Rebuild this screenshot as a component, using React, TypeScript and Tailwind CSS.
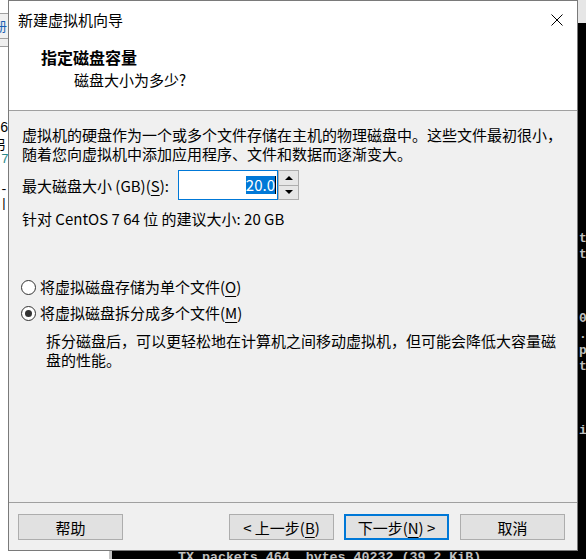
import React from 'react';

const Key: React.FC<{ k: string }> = ({ k }) => (
  <span className="underline underline-offset-[3px] decoration-1">{k}</span>
);

const Btn: React.FC<{ children: React.ReactNode; primary?: boolean }> = ({ children, primary }) => (
  <button
    className={
      primary
        ? 'h-[26px] w-[105px] bg-[#e1e1e1] border-2 border-[#0078d7] text-[15px] leading-none text-black flex items-center justify-center'
        : 'h-[26px] w-[105px] bg-[#e1e1e1] border border-[#adadad] text-[15px] leading-none text-black flex items-center justify-center'
    }
  >
    {children}
  </button>
);

const Radio: React.FC<{ checked?: boolean; children: React.ReactNode }> = ({ checked, children }) => (
  <div className="flex items-center h-[20px] gap-[4px]">
    <span className="w-[15px] h-[15px] rounded-full border border-[#333] bg-white flex items-center justify-center">
      {checked && <span className="w-[7px] h-[7px] rounded-full bg-[#333]"></span>}
    </span>
    <span className="leading-[20px]">{children}</span>
  </div>
);

const App: React.FC = () => {
  // tails of terminal lines peeking out right of the dialog
  const termTails = [
    { y: 231, c: 't' },
    { y: 247, c: 't' },
    { y: 311, c: '0' },
    { y: 327, c: '.' },
    { y: 343, c: 'p' },
    { y: 359, c: 't' },
    { y: 423, c: 'i' },
  ];

  return (
    <div className="relative w-[586px] h-[559px] overflow-hidden bg-white font-['Noto_Sans_CJK_SC','Noto_Sans',sans-serif] text-black">
      {/* window behind, left edge */}
      <div className="absolute left-0 top-0 w-[8px] h-full overflow-hidden">
        <div className="mt-[13px] h-[34px] bg-[#f0f0f0] border-t border-b border-[#a0a0a0]">
          <div className="h-[25px] border-b border-[#a0a0a0] text-[#1a5fb4] text-[13px] leading-[24px] -ml-[6px]">册</div>
        </div>
        <div className="absolute left-0 top-[121px] text-[14px] leading-[14px] font-['Liberation_Mono',monospace]">6</div>
        <div className="absolute -left-[7px] top-[137px] text-[13px] leading-[14px]">另</div>
        <div className="absolute left-[1px] top-[153px] text-[13px] leading-[14px] text-[#2a8a8a] font-['Liberation_Mono',monospace]">7</div>
        <div className="absolute left-0 top-[183px] text-[13px] leading-[14px] font-['Liberation_Mono',monospace]">-|</div>
      </div>

      {/* terminal window behind */}
      <div className="absolute left-[109px] top-0 right-0 bottom-0 flex flex-col">
        <div className="h-[23px] bg-[#e6e6e6]"></div>
        <div className="flex-1 bg-black border-l-[3px] border-[#c4c4c4]"></div>
      </div>
      {termTails.map((t) => (
        <div
          key={t.y}
          className="absolute left-[579px] text-[13px] leading-[16px] font-bold text-[#c0c0c0] font-['Liberation_Mono',monospace]"
          style={{ top: t.y }}
        >
          {t.c}
        </div>
      ))}
      <div className="absolute left-[178px] top-[550px] whitespace-pre text-[13.3px] leading-[16px] font-bold text-[#c0c0c0] font-['Liberation_Mono',monospace]">
        TX packets 464  bytes 40232 (39.2 KiB)
      </div>

      {/* wizard dialog */}
      <div className="absolute left-[8px] top-0 w-[570px] h-[551px] border border-[#7a7a7a] bg-[#f0f0f0] flex flex-col text-[15px]">
        <div className="h-[110px] shrink-0 bg-white border-b border-[#a0a0a0]">
          <div className="h-[37px] flex items-center justify-between pl-[9px] pr-[14px]">
            <span className="leading-[20px]">新建虚拟机向导</span>
            <svg width="12" height="12" viewBox="0 0 12 12">
              <path d="M0.5 0.5 L11.5 11.5 M11.5 0.5 L0.5 11.5" stroke="#000" strokeWidth="1" />
            </svg>
          </div>
          <div className="pl-[32px] pt-[9px] text-[16px] font-bold leading-[20px]">指定磁盘容量</div>
          <div className="pl-[65px] mt-[3px] leading-[20px]">磁盘大小为多少?</div>
        </div>

        <div className="flex-1 pl-[13px]">
          <p className="pt-[14px] leading-[19px]">
            虚拟机的硬盘作为一个或多个文件存储在主机的物理磁盘中。这些文件最初很小，
            <br />
            随着您向虚拟机中添加应用程序、文件和数据而逐渐变大。
          </p>

          <div className="mt-[7px] flex h-[30px]">
            <label className="w-[156px] leading-[32px]">
              最大磁盘大小 (GB)(<Key k="S" />):
            </label>
            <div className="w-[100px] h-[30px] bg-white border border-[#0078d7] flex items-center justify-end pr-[1px]">
              <span className="bg-[#0078d7] text-white leading-[18px] h-[18px]">20.0</span>
              <span className="w-[1px] h-[18px] bg-black"></span>
            </div>
            <div className="w-[21px] h-[30px] border border-[#adadad] flex flex-col">
              <div className="flex-1 bg-[#e6e6e6] border-b border-[#adadad] flex items-center justify-center">
                <svg width="8" height="4" viewBox="0 0 8 4">
                  <path d="M0 4 L4 0 L8 4 Z" fill="#000" />
                </svg>
              </div>
              <div className="flex-1 bg-[#e6e6e6] flex items-center justify-center">
                <svg width="8" height="4" viewBox="0 0 8 4">
                  <path d="M0 0 L8 0 L4 4 Z" fill="#000" />
                </svg>
              </div>
            </div>
          </div>

          <div className="mt-[9px] leading-[19px]">针对 CentOS 7 64 位 的建议大小: 20 GB</div>

          <div className="mt-[49px] -ml-[1px]">
            <Radio>
              将虚拟磁盘存储为单个文件(<Key k="O" />)
            </Radio>
            <div className="mt-[6px]">
              <Radio checked>
                将虚拟磁盘拆分成多个文件(<Key k="M" />)
              </Radio>
            </div>
          </div>

          <p className="mt-[8px] pl-[24px] leading-[19px]">
            拆分磁盘后，可以更轻松地在计算机之间移动虚拟机，但可能会降低大容量磁
            <br />
            盘的性能。
          </p>
        </div>

        <div className="shrink-0 border-t border-[#a0a0a0] pt-[11px] pb-[10px] pl-[9px] pr-[12px] flex justify-between">
          <Btn>帮助</Btn>
          <div className="flex">
            <Btn>
              &lt; 上一步(<Key k="B" />)
            </Btn>
            <div className="ml-[10px]">
              <Btn primary>
                下一步(<Key k="N" />) &gt;
              </Btn>
            </div>
            <div className="ml-[11px]">
              <Btn>取消</Btn>
            </div>
          </div>
        </div>
      </div>
    </div>
  );
};

export default App;
